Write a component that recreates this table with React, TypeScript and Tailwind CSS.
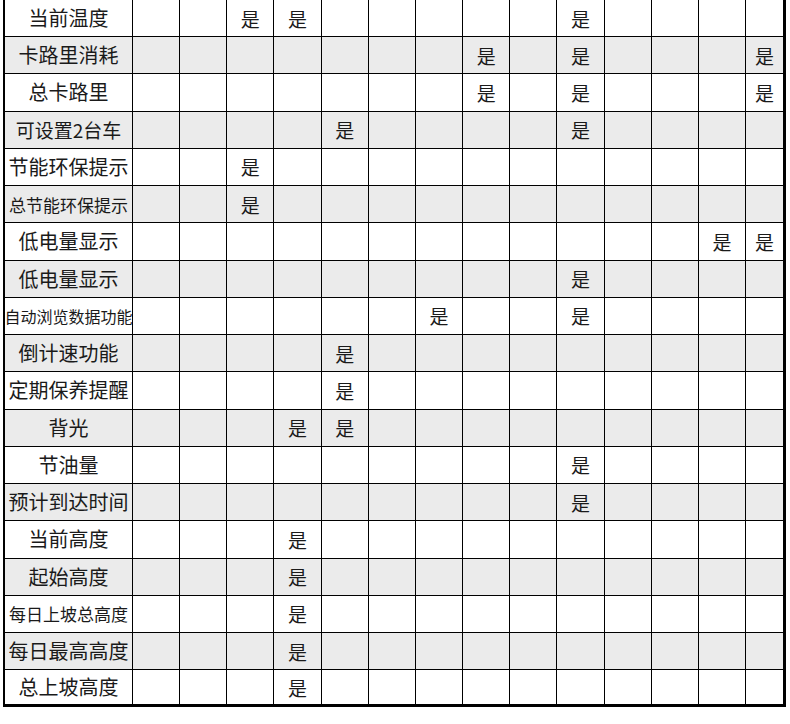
import React from "react";

// each row: label, label font size, columns (1-14) marked 是
const rows: { label: string; size: string; yes: number[] }[] = [
  { label: "当前温度", size: "text-[20px]", yes: [3, 4, 10] },
  { label: "卡路里消耗", size: "text-[20px]", yes: [8, 10, 14] },
  { label: "总卡路里", size: "text-[20px]", yes: [8, 10, 14] },
  { label: "可设置2台车", size: "text-[19px]", yes: [5, 10] },
  { label: "节能环保提示", size: "text-[20px]", yes: [3] },
  { label: "总节能环保提示", size: "text-[17px]", yes: [3] },
  { label: "低电量显示", size: "text-[20px]", yes: [13, 14] },
  { label: "低电量显示", size: "text-[20px]", yes: [10] },
  { label: "自动浏览数据功能", size: "text-[16px]", yes: [7, 10] },
  { label: "倒计速功能", size: "text-[20px]", yes: [5] },
  { label: "定期保养提醒", size: "text-[20px]", yes: [5] },
  { label: "背光", size: "text-[20px]", yes: [4, 5] },
  { label: "节油量", size: "text-[20px]", yes: [10] },
  { label: "预计到达时间", size: "text-[20px]", yes: [10] },
  { label: "当前高度", size: "text-[20px]", yes: [4] },
  { label: "起始高度", size: "text-[20px]", yes: [4] },
  { label: "每日上坡总高度", size: "text-[17px]", yes: [4] },
  { label: "每日最高高度", size: "text-[20px]", yes: [4] },
  { label: "总上坡高度", size: "text-[20px]", yes: [4] },
];

const cols = Array.from({ length: 14 }, (_, i) => i + 1);

const rowHeight = (i: number) => {
  if (i === 0) return "h-[37px] border-b border-black";
  if (i === rows.length - 1) return "h-[33.5px]";
  return "h-[37.25px] border-b border-black";
};

const App = () => {
  return (
    <div className="w-[790px] h-[724px] bg-white overflow-hidden font-['Noto_Sans_CJK_SC','Noto_Sans',sans-serif] text-[#1a1a1a]">
      <div className="ml-[3px] w-[783px] border-l-2 border-r-[3px] border-b-[3px] border-black">
        {rows.map((row, i) => (
          <div
            key={i}
            className={`grid grid-cols-[128px_repeat(13,minmax(0,1fr))_37px] ${rowHeight(i)} ${
              i % 2 === 1 ? "bg-[#ebebeb]" : "bg-white"
            }`}
          >
            <div
              className={`flex items-center justify-center whitespace-nowrap border-r border-black leading-none ${row.size}`}
            >
              {row.label}
            </div>
            {cols.map((c) => (
              <div
                key={c}
                className={`flex items-center justify-center text-[19px] leading-none ${
                  c < 14 ? "border-r border-black" : ""
                }`}
              >
                {row.yes.includes(c) ? "是" : ""}
              </div>
            ))}
          </div>
        ))}
      </div>
    </div>
  );
};

export default App;
